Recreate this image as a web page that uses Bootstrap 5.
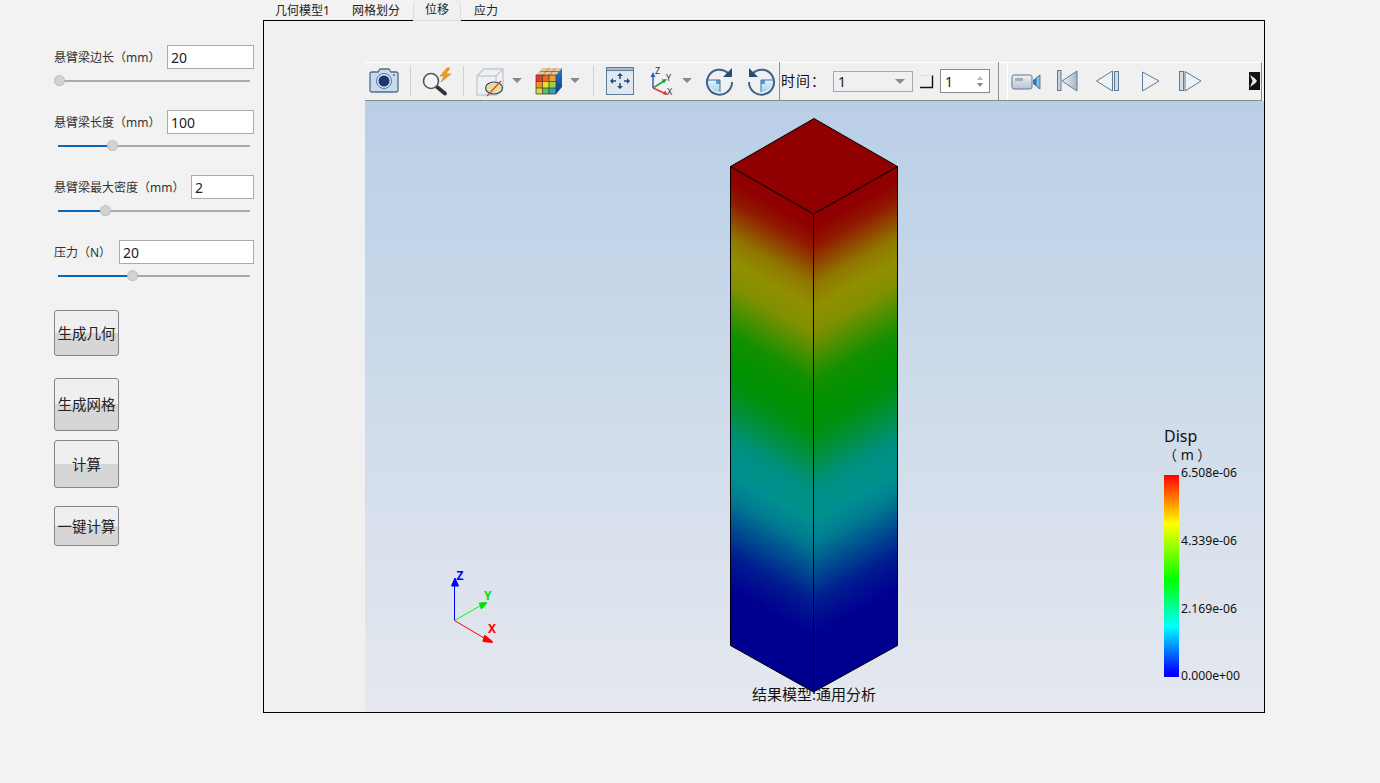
<!DOCTYPE html>
<html lang="zh-CN">
<head>
    <meta charset="UTF-8">
    <title>悬臂梁分析</title>
    <link href="https://cdn.jsdelivr.net/npm/bootstrap@5.3.3/dist/css/bootstrap.min.css" rel="stylesheet">
    <style>
        html, body { height: 100%; }
        body {
            background: #f2f2f2;
            color: #222;
            font-family: "Noto Sans", "Noto Sans CJK SC", sans-serif;
            overflow: hidden;
        }

        /* left panel */
        .side-panel { width: 263px; padding: 45px 9px 0 54px; flex: none; }
        .param-group { margin-bottom: 24px; }
        .param-row { height: 24px; }
        .param-label { font-size: 12px; color: #333; white-space: nowrap; padding-top: 2px; }
        .param-input {
            height: 24px;
            min-height: 0;
            padding: 0 3px;
            border: 1px solid #aaa;
            border-radius: 0;
            font-size: 14px;
            color: #222;
        }
        .input-87 { width: 87px; }
        .input-63 { width: 63px; }
        .input-135 { width: 135px; }
        .beam-range {
            display: block;
            width: 196px;
            height: 11px;
            margin-top: 6px;
            padding: 0;
            appearance: none;
            -webkit-appearance: none;
            background: transparent;
        }
        .beam-range::-webkit-slider-runnable-track {
            height: 2px;
            border-radius: 0;
            background: linear-gradient(to right, transparent 4px, #0a66b8 4px, #0a66b8 var(--fill), #aaa var(--fill));
        }
        .beam-range::-webkit-slider-thumb {
            -webkit-appearance: none;
            width: 11px;
            height: 11px;
            margin-top: -4.5px;
            border-radius: 50%;
            border: 1px dotted #aaa;
            background: #d2d2d2;
        }
        .tool-btn {
            display: block;
            width: 65px;
            padding: 0;
            font-size: 14.5px;
            line-height: 1;
            color: #222;
            border: 1px solid #858585;
            border-radius: 3px;
            background: linear-gradient(to bottom, #efefef 50%, #d6d6d6 50%);
        }
        .btn-geo { height: 46px; margin-top: 29px; }
        .btn-mesh { height: 53px; margin-top: 22px; }
        .btn-calc { height: 48px; margin-top: 9px; }
        .btn-auto { height: 40px; margin-top: 18px; }

        /* tabs and frame */
        .main-col { width: 1002px; flex: none; }
        .tab-bar { height: 20px; border: 0; flex-wrap: nowrap; position: relative; z-index: 1; }
        .tab-link {
            height: 21px;
            padding: 0 11px;
            font-size: 12px;
            line-height: 19px;
            color: #222;
            border: 1px solid transparent;
            border-top: 0;
            border-radius: 0;
            margin: 0;
            background: transparent;
        }
        .tab-link:first-child { padding-right: 9px; }
        .nav-tabs .tab-link.active {
            margin: 0 1px;
            color: #222;
            background: #f0f0f0;
            border-color: #ddd;
            border-top: 0;
        }
        .view-frame {
            height: 693px;
            padding: 41px 0 0 101px;
            border: 1px solid #000;
            background: #f0f0f0;
        }
        .viewer { height: 650px; }

        /* toolbar */
        .tool-strip {
            width: 897px;
            height: 39px;
            border-top: 1px solid #fff;
            border-bottom: 1px solid #8a8a8a;
            background: #f0f0f0;
        }
        .tool-strip svg { display: block; flex: none; margin-top: -1px; }
        .tb-sep { width: 1px; height: 30px; margin-top: 3px; background: #d0d0d0; flex: none; }
        .tb-bar { width: 1px; height: 39px; margin-top: -1px; background: #8f8f8f; flex: none; }
        .time-label { width: 53px; padding-left: 1px; font-size: 14px; letter-spacing: 1px; line-height: 36px; color: #111; flex: none; }
        .time-combo {
            width: 80px;
            height: 21px;
            margin-top: 8px;
            padding-left: 4px;
            border: 1px solid #a8a8a8;
            background: #f0f0f0;
            font-size: 14px;
            line-height: 20px;
            position: relative;
            flex: none;
        }
        .time-combo::after {
            content: "";
            position: absolute;
            right: 7px;
            top: 7px;
            border-left: 5px solid transparent;
            border-right: 5px solid transparent;
            border-top: 5px solid #8a8a8a;
        }
        .time-spin {
            width: 50px;
            height: 24px;
            margin-top: 6px;
            padding-left: 4px;
            border: 1px solid #8a8a8a;
            background: #fff;
            font-size: 14px;
            line-height: 23px;
            position: relative;
            flex: none;
        }
        .time-spin::before, .time-spin::after {
            content: "";
            position: absolute;
            right: 6px;
            border-left: 3px solid transparent;
            border-right: 3px solid transparent;
        }
        .time-spin::before { top: 6px; border-bottom: 4px solid #bbb; }
        .time-spin::after { top: 13px; border-top: 4px solid #888; }
        .spacer-8 { width: 8px; flex: none; }
        .strip-right {
            width: 255px;
            height: 38px;
            margin-top: -1px;
            border-top: 1px solid #fff;
            border-left: 1px solid #fff;
            border-right: 1px solid #8a8a8a;
            flex: none;
        }
        .strip-right svg { margin: -1px 0 0 -1px; }

        /* scene */
        .scene { display: block; }
        .scene text { font-family: "Noto Sans", "Noto Sans CJK SC", sans-serif; }
    </style>
</head>
<body>
    <div class="d-flex">
        <!-- left panel -->
        <div class="side-panel">
            <div class="param-group">
                <div class="param-row d-flex align-items-center justify-content-between">
                    <span class="param-label">悬臂梁边长（mm）</span>
                    <input class="form-control param-input input-87" value="20">
                </div>
                <input type="range" class="form-range beam-range" min="0" max="185" value="0" style="--fill:5px">
            </div>
            <div class="param-group">
                <div class="param-row d-flex align-items-center justify-content-between">
                    <span class="param-label">悬臂梁长度（mm）</span>
                    <input class="form-control param-input input-87" value="100">
                </div>
                <input type="range" class="form-range beam-range" min="0" max="185" value="53" style="--fill:58px">
            </div>
            <div class="param-group">
                <div class="param-row d-flex align-items-center justify-content-between">
                    <span class="param-label">悬臂梁最大密度（mm）</span>
                    <input class="form-control param-input input-63" value="2">
                </div>
                <input type="range" class="form-range beam-range" min="0" max="185" value="46" style="--fill:51px">
            </div>
            <div class="param-group mb-0">
                <div class="param-row d-flex align-items-center justify-content-between">
                    <span class="param-label">压力（N）</span>
                    <input class="form-control param-input input-135" value="20">
                </div>
                <input type="range" class="form-range beam-range" min="0" max="185" value="73" style="--fill:78px">
            </div>
            <button class="btn tool-btn btn-geo">生成几何</button>
            <button class="btn tool-btn btn-mesh">生成网格</button>
            <button class="btn tool-btn btn-calc">计算</button>
            <button class="btn tool-btn btn-auto">一键计算</button>
        </div>

        <!-- tabs and viewer -->
        <div class="main-col">
            <div class="nav nav-tabs tab-bar">
                <a class="nav-link tab-link">几何模型1</a>
                <a class="nav-link tab-link">网格划分</a>
                <a class="nav-link tab-link active">位移</a>
                <a class="nav-link tab-link">应力</a>
            </div>
            <div class="view-frame">
                <div class="viewer">
                    <div class="tool-strip d-flex">
                        <!-- screenshot -->
                        <svg width="45" height="38" viewBox="365 62 45 38">
                            <path d="M372 72h6l2-3h9l2 3h5q2 0 2 2v16q0 2-2 2h-24q-2 0-2-2v-16q0-2 2-2z" fill="#c6daf0" stroke="#566d88" stroke-width="1.3"/>
                            <circle cx="384" cy="81" r="7.500" fill="#dbe6f3" stroke="#5b7390"/>
                            <circle cx="384" cy="81" r="5.500" fill="#1b3670"/>
                            <circle cx="394" cy="75" r="1" fill="#566d88"/>
                        </svg>
                        <div class="tb-sep"></div>
                        <!-- quick zoom -->
                        <svg width="52" height="38" viewBox="411 62 52 38">
                            <path d="M437 87l8 6.500" stroke="#333" stroke-width="3.800" stroke-linecap="round"/>
                            <circle cx="431" cy="81" r="7.500" fill="#f2f5f8" stroke="#555" stroke-width="1.600"/>
                            <path d="M447 68l-7 8h4l-3 6 10-8h-5l4-6z" fill="#ee9a26" stroke="#d67f12" stroke-width=".6"/>
                        </svg>
                        <div class="tb-sep"></div>
                        <!-- display cube and colour cube -->
                        <svg width="129" height="38" viewBox="464 62 129 38">
                            <defs>
                                <linearGradient id="sideBlue" x1="0" y1="0" x2="0" y2="1">
                                    <stop offset="0" stop-color="#1f7fc8"/>
                                    <stop offset="1" stop-color="#0c3c9a"/>
                                </linearGradient>
                            </defs>
                            <path d="M477 76l7-7h19v19l-7 7h-19z" fill="#eef0f4" stroke="#c4cad4" stroke-width="1.4"/>
                            <path d="M477 76h19v19M496 76l7-7" fill="none" stroke="#c4cad4" stroke-width="1.4"/>
                            <ellipse cx="494" cy="88" rx="8.500" ry="6" fill="#ebdc9d" stroke="#2f4a78" stroke-width="1.2"/>
                            <path d="M487 96l14-15" stroke="#c8532c" stroke-width="1.300"/>
                            <path d="M512 78h10l-5 5z" fill="#8a8a8a"/>
                            <path d="M536 75l6-7h20l-6 7z" fill="#e9c79a"/>
                            <path d="M543 71.500h19M540 71.500h18M543 75l6-7M549.500 75l6-7" fill="none" stroke="#8a6f52" stroke-width=".7"/>
                            <path d="M556 75l6-7v19l-6 7z" fill="url(#sideBlue)"/>
                            <rect x="536" y="75" width="6.500" height="6.500" fill="#e8352e"/>
                            <rect x="542.500" y="75" width="6.500" height="6.500" fill="#ea6a2a"/>
                            <rect x="549" y="75" width="7" height="6.500" fill="#f0a02e"/>
                            <rect x="536" y="81.500" width="6.500" height="6.500" fill="#f29022"/>
                            <rect x="542.500" y="81.500" width="6.500" height="6.500" fill="#ecdc2c"/>
                            <rect x="549" y="81.500" width="7" height="6.500" fill="#8fd83e"/>
                            <rect x="536" y="88" width="6.500" height="6" fill="#c8e03a"/>
                            <rect x="542.500" y="88" width="6.500" height="6" fill="#4cc85a"/>
                            <rect x="549" y="88" width="7" height="6" fill="#2aa8c0"/>
                            <path d="M536 75h20v19h-20zM542.500 75v19M549 75v19M536 81.500h20M536 88h20" fill="none" stroke="#3e2e22" stroke-width=".7"/>
                            <path d="M570 78h10l-5 5z" fill="#8a8a8a"/>
                        </svg>
                        <div class="tb-sep"></div>
                        <!-- fit, axes, rotate -->
                        <svg width="185" height="38" viewBox="594 62 185 38">
                            <defs>
                                <linearGradient id="quarterFill" x1="0" y1="0" x2="0" y2="1">
                                    <stop offset="0" stop-color="#e8f4fb"/>
                                    <stop offset="1" stop-color="#9fd4ee"/>
                                </linearGradient>
                            </defs>
                            <rect x="606.500" y="67.500" width="27" height="27" fill="#dfe7f0" stroke="#5f7a96"/>
                            <rect x="606.500" y="67.500" width="27" height="3" fill="#a9bccf" stroke="#5f7a96"/>
                            <path d="M620 75v4M620 83v4M612 81h4M624 81h4" stroke="#27496f" stroke-width="1.500"/>
                            <path d="M620 73l-3 3h6zM620 89l-3-3h6zM610 81l3-3v6zM630 81l-3-3v6z" fill="#27496f"/>
                            <path d="M653 88v-13" stroke="#2a62b8" stroke-width="1.500"/>
                            <path d="M653 72l-2.500 5h5z" fill="#2a62b8"/>
                            <path d="M653 88l11-7" stroke="#2c9a4a" stroke-width="1.500"/>
                            <path d="M667 79l-5.500.5 2.500 4z" fill="#2c9a4a"/>
                            <path d="M653 88l11 5" stroke="#d83a3a" stroke-width="1.500"/>
                            <path d="M668 95l-3-4.500-2 4z" fill="#d83a3a"/>
                            <text x="655" y="74" font-size="9" fill="#333">Z</text>
                            <text x="666" y="81" font-size="9" fill="#333">Y</text>
                            <text x="667" y="95" font-size="9" fill="#333">X</text>
                            <path d="M682 78h10l-5 5z" fill="#8a8a8a"/>
                            <!-- rotate right -->
                            <path d="M720 80h-12a12 12 0 0 0 12 12z" fill="url(#quarterFill)"/>
                            <rect x="716" y="80" width="4" height="4" fill="#4d9fdc"/>
                            <path d="M708 80h12v12" fill="none" stroke="#4a6f96" stroke-width="1"/>
                            <path d="M728 73a12.500 12.500 0 1 0 4 9" fill="none" stroke="#3f6389" stroke-width="2"/>
                            <path d="M732 68v9h-9z" fill="#264d7a"/>
                            <!-- rotate left -->
                            <path d="M761 80h12a12 12 0 0 1-12 12z" fill="url(#quarterFill)"/>
                            <rect x="761" y="80" width="4" height="4" fill="#4d9fdc"/>
                            <path d="M773 80h-12v12" fill="none" stroke="#4a6f96" stroke-width="1"/>
                            <path d="M753 73a12.500 12.500 0 1 1-4 9" fill="none" stroke="#3f6389" stroke-width="2"/>
                            <path d="M749 68v9h9z" fill="#264d7a"/>
                        </svg>
                        <div class="tb-bar"></div>
                        <div class="time-label">时间：</div>
                        <div class="time-combo">1</div>
                        <svg width="27" height="38" viewBox="913 62 27 38">
                            <path d="M920 87.500h12.500v-12" fill="none" stroke="#111" stroke-width="1.400"/>
                            <path d="M920 75.500h12" fill="none" stroke="#ddd"/>
                        </svg>
                        <div class="time-spin">1</div>
                        <div class="spacer-8"></div>
                        <div class="tb-bar"></div>
                        <div class="spacer-8"></div>
                        <div class="strip-right">
                            <svg width="255" height="38" viewBox="1007 62 255 38">
                                <defs>
                                    <linearGradient id="bodyGray" x1="0" y1="0" x2="0" y2="1">
                                        <stop offset="0" stop-color="#eef1f5"/>
                                        <stop offset="1" stop-color="#b9c3d2"/>
                                    </linearGradient>
                                    <linearGradient id="wedgeGray" x1="0" y1="0" x2="1" y2="0">
                                        <stop offset="0" stop-color="#eef2f6"/>
                                        <stop offset="1" stop-color="#aab6c4"/>
                                    </linearGradient>
                                </defs>
                                <rect x="1012" y="75" width="20" height="14" rx="2" fill="url(#bodyGray)" stroke="#5f7a96"/>
                                <rect x="1015" y="78" width="8" height="3" fill="#a4adb8"/>
                                <path d="M1033 80l3-2v8l-3-2z" fill="#2f78b8"/>
                                <path d="M1036 78l4-3v14l-4-3z" fill="#7fc0e8" stroke="#3f6389" stroke-width=".8"/>
                                <rect x="1057.500" y="70.500" width="3.500" height="20" fill="#c8d2de" stroke="#5f7a96"/>
                                <path d="M1062 81l15-10v20z" fill="url(#wedgeGray)" stroke="#5f7a96"/>
                                <path d="M1096.500 81l16-10v20z" fill="#eef2f6" stroke="#5f7a96"/>
                                <rect x="1114.500" y="71.500" width="4" height="19" fill="#d4dce6" stroke="#5f7a96"/>
                                <path d="M1142.500 72l16.500 9-16.500 10z" fill="#eef2f6" stroke="#5f7a96"/>
                                <rect x="1179.500" y="71.500" width="4" height="19" fill="#d4dce6" stroke="#5f7a96"/>
                                <path d="M1185 71.500l16 9.500-16 10z" fill="#eef2f6" stroke="#5f7a96"/>
                                <rect x="1249" y="72" width="11" height="18" fill="#111"/>
                                <path d="M1250 75l5 3.500 2 2.500-2 2.500-5 3.500 2.500-6z" fill="#e8e8e8"/>
                            </svg>
                        </div>
                    </div>
                    <svg class="scene" width="899" height="611" viewBox="365 101 899 611">
                        <defs>
                            <linearGradient id="skyFill" x1="0" y1="0" x2="0" y2="1">
                                <stop offset="0" stop-color="#b9cfe6"/>
                                <stop offset="1" stop-color="#e5e8ef"/>
                            </linearGradient>
                            <linearGradient id="dispStops">
                                <stop offset=".03" stop-color="#900000"/>
                                <stop offset=".07" stop-color="#901800"/>
                                <stop offset=".11" stop-color="#904800"/>
                                <stop offset=".15" stop-color="#907800"/>
                                <stop offset=".2" stop-color="#909000"/>
                                <stop offset=".25" stop-color="#808f00"/>
                                <stop offset=".3" stop-color="#489000"/>
                                <stop offset=".35" stop-color="#129000"/>
                                <stop offset=".41" stop-color="#009000"/>
                                <stop offset=".46" stop-color="#009010"/>
                                <stop offset=".52" stop-color="#009048"/>
                                <stop offset=".57" stop-color="#009080"/>
                                <stop offset=".64" stop-color="#009090"/>
                                <stop offset=".69" stop-color="#007c90"/>
                                <stop offset=".75" stop-color="#004c90"/>
                                <stop offset=".81" stop-color="#001c90"/>
                                <stop offset=".88" stop-color="#000090"/>
                            </linearGradient>
                            <linearGradient id="dispLeft" href="#dispStops" gradientUnits="userSpaceOnUse" x1="730" y1="166" x2="524.200" y2="529.400"></linearGradient>
                            <linearGradient id="dispRight" href="#dispStops" gradientUnits="userSpaceOnUse" x1="897" y1="166" x2="1102.800" y2="529.400"></linearGradient>
                            <linearGradient id="legendFill" x1="0" y1="0" x2="0" y2="1">
                                <stop offset="0" stop-color="#ff0000"/>
                                <stop offset=".24" stop-color="#ffff00"/>
                                <stop offset=".52" stop-color="#00ff00"/>
                                <stop offset=".75" stop-color="#00ffff"/>
                                <stop offset=".98" stop-color="#0000ff"/>
                            </linearGradient>
                        </defs>
                        <rect x="365" y="101" width="899" height="611" fill="url(#skyFill)"/>

                        <!-- beam -->
                        <path d="M730.500 166.500L813.500 214V692L730.500 645.500z" fill="url(#dispLeft)" stroke="#000"/>
                        <path d="M897.500 166.500L813.500 214V692L897.500 645.500z" fill="url(#dispRight)" stroke="#000"/>
                        <path d="M814 118.500L897.500 166.500L813.500 214L730.500 166.500z" fill="#900000" stroke="#000"/>
                        <text x="814" y="700" font-size="15" text-anchor="middle" fill="#111">结果模型:通用分析</text>

                        <!-- triad -->
                        <path d="M454.500 620.500V585" stroke="#0000ff" stroke-width="1"/>
                        <path d="M455 578l-3.500 8h7z" fill="#0000ff" stroke="#0000ff" stroke-linejoin="round"/>
                        <path d="M454.500 620.500L480 606" stroke="#00ff00" stroke-width="1"/>
                        <path d="M486 603l-6 .5 1.500 4.500z" fill="#00e000" stroke="#00e000" stroke-linejoin="round" stroke-width="2"/>
                        <path d="M454.500 620.500L484 638" stroke="#ff0000" stroke-width="1"/>
                        <path d="M492 642l-7-6-1.500 5z" fill="#ff0000" stroke="#ff0000" stroke-linejoin="round" stroke-width="2"/>
                        <text x="456.500" y="580" font-size="12" font-weight="700" fill="#0000ff">Z</text>
                        <text x="484" y="600" font-size="12" font-weight="700" fill="#00e000">Y</text>
                        <text x="488" y="633" font-size="12" font-weight="700" fill="#ff0000">X</text>

                        <!-- legend -->
                        <text x="1164" y="442" font-size="16" fill="#111">Disp</text>
                        <text x="1163" y="460" font-size="14" fill="#111">（ m ）</text>
                        <rect x="1164" y="475" width="15" height="202" fill="url(#legendFill)"/>
                        <text x="1181" y="477" font-size="12.2" fill="#111">6.508e-06</text>
                        <text x="1181" y="545" font-size="12.2" fill="#111">4.339e-06</text>
                        <text x="1181" y="613" font-size="12.2" fill="#111">2.169e-06</text>
                        <text x="1181" y="680" font-size="12.2" fill="#111">0.000e+00</text>
                    </svg>
                </div>
            </div>
        </div>
    </div>
    <script src="https://cdn.jsdelivr.net/npm/bootstrap@5.3.3/dist/js/bootstrap.bundle.min.js"></script>
</body>
</html>
